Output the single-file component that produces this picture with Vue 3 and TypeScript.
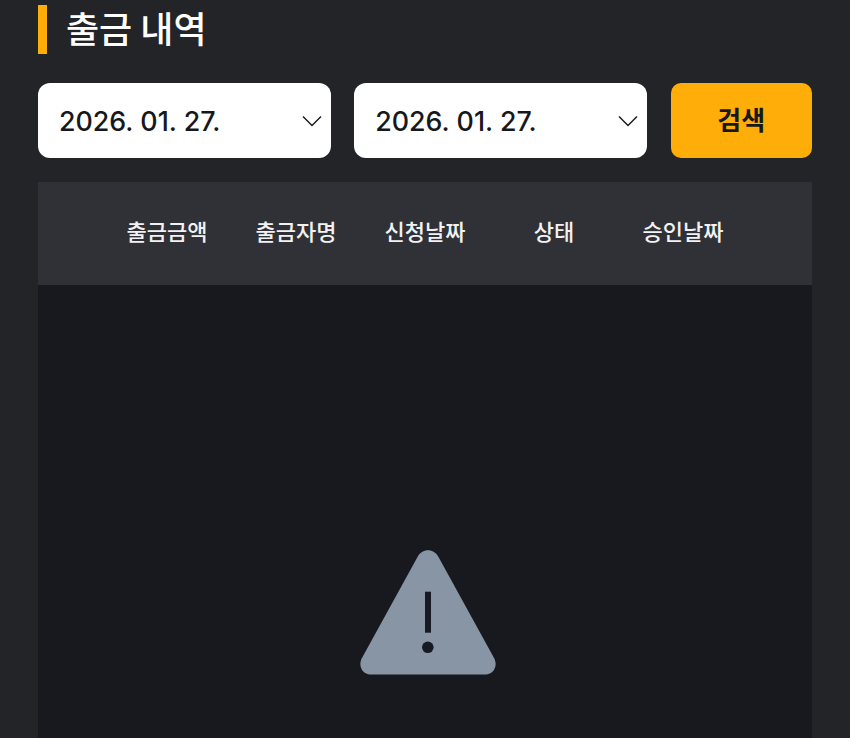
<script setup lang="ts">
const dates = ['2026. 01. 27.', '2026. 01. 27.']
const columns = ['출금금액', '출금자명', '신청날짜', '상태', '승인날짜']
</script>

<template>
  <div class="page">
    <h2 class="title">출금 내역</h2>

    <div class="search-row">
      <div v-for="(date, index) in dates" :key="index" class="date-select">
        <span>{{ date }}</span>
        <svg class="chevron" width="20" height="12" viewBox="0 0 20 12">
          <path d="M1 1.5 L10 10.5 L19 1.5" fill="none" stroke="#1a1c20" stroke-width="1.5" />
        </svg>
      </div>
      <button class="search-btn">검색</button>
    </div>

    <div class="table">
      <div class="table-head">
        <div v-for="col in columns" :key="col" class="head-cell">{{ col }}</div>
      </div>
      <div class="table-body">
        <svg class="warning" width="136" height="125" viewBox="0 0 136 125">
          <path
            d="M57.5 7 C62 -2 74 -2 78.5 7 L133.5 107 C139 116 133 124.5 126 124.5 L10 124.5 C3 124.5 -3 116 2.5 107 Z"
            fill="#8795a5"
          />
          <rect x="65" y="41.7" width="6" height="41" fill="#171a22" />
          <circle cx="67.8" cy="97.3" r="5.8" fill="#171a22" />
        </svg>
      </div>
    </div>
  </div>
</template>

<style scoped>
.page {
  box-sizing: border-box;
  width: 850px;
  height: 738px;
  overflow: hidden;
  padding: 5px 38px 0;
  background-color: #232428;
  font-family: Inter, 'Noto Sans CJK KR', sans-serif;
}

.title {
  margin: 0 0 29px;
  height: 49px;
  border-left: 9px solid #ffad08;
  padding-left: 19px;
  color: #fff;
  font-family: 'Noto Sans CJK KR', sans-serif;
  font-size: 36px;
  font-weight: 500;
  line-height: 44px;
}

.search-row {
  display: flex;
  gap: 23.6px;
  margin-bottom: 24px;
}

.date-select {
  flex: 0 0 292.7px;
  box-sizing: border-box;
  height: 75px;
  display: flex;
  align-items: center;
  justify-content: space-between;
  padding: 0 9px 0 21px;
  background-color: #fff;
  border-radius: 12px;
  color: #17181c;
  font-size: 26.8px;
  font-weight: 500;
}

.search-btn {
  flex: 1;
  border: none;
  border-radius: 10px;
  padding: 0 0 4px;
  background-color: #ffad08;
  color: #17181c;
  font-family: 'Noto Sans CJK KR', sans-serif;
  font-size: 26px;
  font-weight: 700;
}

.table-head {
  height: 103px;
  padding-bottom: 8px;
  box-sizing: border-box;
  display: flex;
  align-items: center;
  justify-content: center;
  background-color: #303136;
}

.head-cell {
  width: 129px;
  text-align: center;
  color: #f2f2f3;
  font-family: 'Noto Sans CJK KR', sans-serif;
  font-size: 22px;
  font-weight: 500;
}

.table-body {
  height: 600px;
  display: flex;
  justify-content: center;
  padding-top: 265px;
  box-sizing: border-box;
  background-color: #17191f;
}

.warning {
  display: block;
  margin-left: 6px;
}
</style>
